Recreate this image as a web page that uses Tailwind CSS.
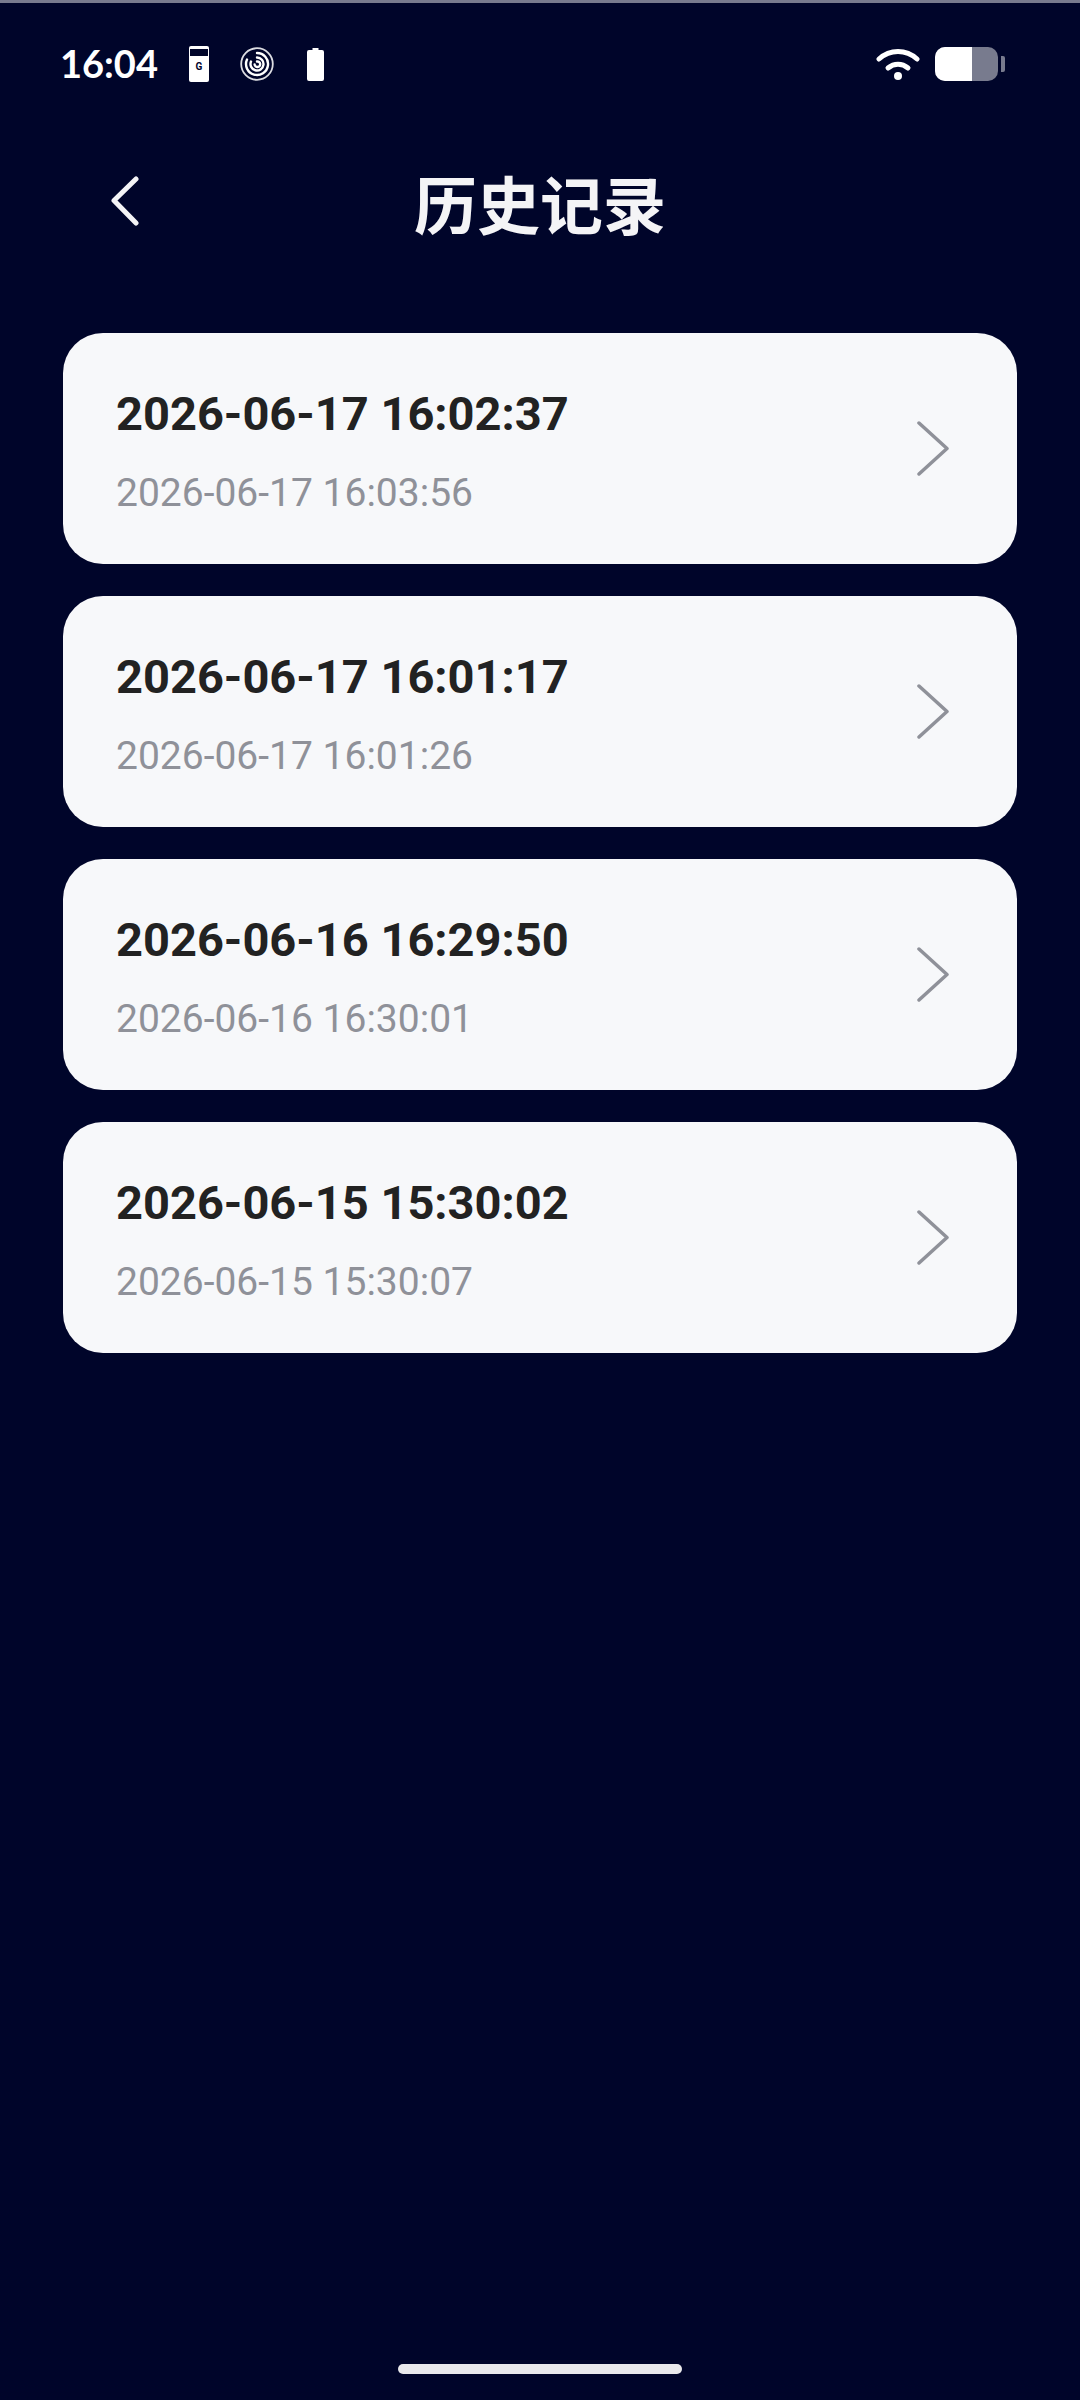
<!doctype html>
<html><head><meta charset="utf-8"><script src="https://cdn.jsdelivr.net/npm/@tailwindcss/browser@4"></script></head>
<body class="m-0">
<div class="w-[1080px] h-[2400px] bg-[#00052a] flex flex-col font-['Roboto','Noto_Sans_CJK_SC',sans-serif] overflow-hidden">
  <div class="h-[3px] bg-[#787b8e] shrink-0"></div>
  <div class="h-[122px] shrink-0 flex items-center pl-[60px] pr-[75px] text-white">
    <span class="font-['Lato',sans-serif] font-bold text-[38px] leading-none w-[129px] pb-[2px]">16:04</span>
    <svg width="20" height="36" viewBox="0 0 20 36"><rect width="20" height="36" rx="2" fill="#fff"/><rect x="1" y="3" width="18" height="7" fill="#00052a"/><text x="10" y="24" font-size="10" font-weight="700" text-anchor="middle" font-family="Roboto" fill="#00052a">G</text></svg>
    <svg width="34" height="34" viewBox="0 0 34 34" class="ml-[31px]" fill="none" stroke="#fff"><circle cx="17" cy="17" r="15.8" stroke-width="1.8" stroke="#dcdde2"/><path d="M17 6a11 11 0 1 1-10 6.500M17 10.500a6.500 6.500 0 1 1-6 4M17 14.500a2.800 2.800 0 1 1-2.400 3" stroke-width="2.400" stroke-linecap="round"/></svg>
    <svg width="17" height="33" viewBox="0 0 17 33" class="ml-[33px]"><path d="M5.500 0h6v2h3.500a2 2 0 0 1 2 2v27a2 2 0 0 1-2 2H2a2 2 0 0 1-2-2V4a2 2 0 0 1 2-2h3.500z" fill="#fff"/></svg>
    <svg width="44" height="32" viewBox="0 0 44 32" class="ml-auto mr-[15px]" fill="none" stroke="#fff" stroke-linecap="round"><path d="M3 11C14 1 30 1 41 11" stroke-width="5"/><path d="M12 20C18 15 26 15 32 20" stroke-width="5"/><circle cx="22" cy="28" r="4" fill="#fff" stroke="none"/></svg>
    <div class="flex items-center">
      <div class="w-[63px] h-[34px] rounded-[10px] overflow-hidden flex bg-[#787b8e]"><div class="w-[37px] bg-white"></div></div>
      <div class="w-[4px] h-[16px] ml-[3px] bg-[#787b8e] rounded-r-[2px]"></div>
    </div>
  </div>
  <div class="relative h-[90px] shrink-0 mt-[37px] flex items-center justify-center">
    <svg width="28" height="52" viewBox="0 0 28 52" class="absolute left-[111px] top-[14px]" fill="none" stroke="#f4f4f6" stroke-width="5" stroke-linecap="round" stroke-linejoin="round"><path d="M25 3 3 24.500 25 47"/></svg>
    <span class="text-[63px] font-bold text-[#f4f4f6] leading-none">历史记录</span>
  </div>
  <div class="flex flex-col gap-[32px] px-[63px] mt-[81px]">
    <div class="h-[231px] rounded-[40px] bg-[#f7f8fa] flex items-center justify-between pl-[53px] pr-[67px]">
      <div class="flex flex-col pt-[6px]"><span class="text-[47px] font-bold text-[#222] leading-[54px]">2026-06-17 16:02:37</span><span class="text-[39px] text-[#8f9199] leading-[46px] mt-[29px]">2026-06-17 16:03:56</span></div>
      <svg width="34" height="56" viewBox="0 0 34 56" fill="none" stroke="#8f9199" stroke-width="3.500" stroke-linecap="round" stroke-linejoin="round"><path d="M3 2 31 27.500 3 53"/></svg>
    </div>
    <div class="h-[231px] rounded-[40px] bg-[#f7f8fa] flex items-center justify-between pl-[53px] pr-[67px]">
      <div class="flex flex-col pt-[6px]"><span class="text-[47px] font-bold text-[#222] leading-[54px]">2026-06-17 16:01:17</span><span class="text-[39px] text-[#8f9199] leading-[46px] mt-[29px]">2026-06-17 16:01:26</span></div>
      <svg width="34" height="56" viewBox="0 0 34 56" fill="none" stroke="#8f9199" stroke-width="3.500" stroke-linecap="round" stroke-linejoin="round"><path d="M3 2 31 27.500 3 53"/></svg>
    </div>
    <div class="h-[231px] rounded-[40px] bg-[#f7f8fa] flex items-center justify-between pl-[53px] pr-[67px]">
      <div class="flex flex-col pt-[6px]"><span class="text-[47px] font-bold text-[#222] leading-[54px]">2026-06-16 16:29:50</span><span class="text-[39px] text-[#8f9199] leading-[46px] mt-[29px]">2026-06-16 16:30:01</span></div>
      <svg width="34" height="56" viewBox="0 0 34 56" fill="none" stroke="#8f9199" stroke-width="3.500" stroke-linecap="round" stroke-linejoin="round"><path d="M3 2 31 27.500 3 53"/></svg>
    </div>
    <div class="h-[231px] rounded-[40px] bg-[#f7f8fa] flex items-center justify-between pl-[53px] pr-[67px]">
      <div class="flex flex-col pt-[6px]"><span class="text-[47px] font-bold text-[#222] leading-[54px]">2026-06-15 15:30:02</span><span class="text-[39px] text-[#8f9199] leading-[46px] mt-[29px]">2026-06-15 15:30:07</span></div>
      <svg width="34" height="56" viewBox="0 0 34 56" fill="none" stroke="#8f9199" stroke-width="3.500" stroke-linecap="round" stroke-linejoin="round"><path d="M3 2 31 27.500 3 53"/></svg>
    </div>
  </div>
  <div class="mt-auto mb-[26px] self-center w-[284px] h-[10px] rounded-full bg-[#e9e9ec]"></div>
</div>
</body></html>
